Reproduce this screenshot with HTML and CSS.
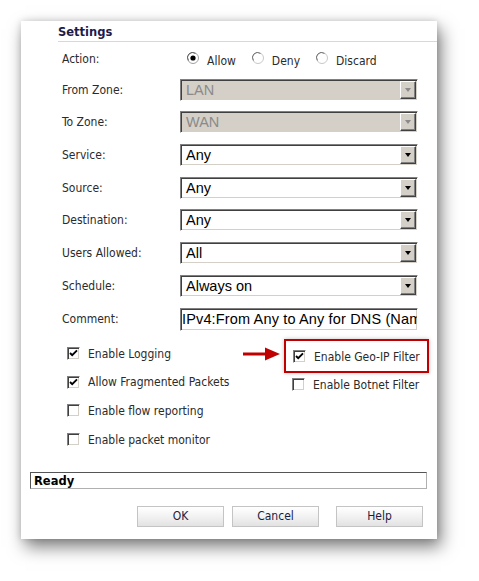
FILE: index.html
```html
<!DOCTYPE html>
<html lang="en">
<head>
  <meta charset="UTF-8">
  <title>Settings</title>
  <link rel="stylesheet" href="styles.css">
</head>
<body>

  <div class="dialog">
    <h2 class="title">Settings</h2>

    <div class="fields">
      <label class="lbl">Action:</label>
      <div class="radios">
        <span class="opt">
          <svg class="radio" width="12" height="12" viewBox="0 0 12 12"><circle cx="6" cy="6" r="5.5" fill="#fff" stroke="#a0a0a0"/><path d="M1.5 8.5A5 5 0 0 1 8.5 1.5" fill="none" stroke="#606060"/><circle cx="6" cy="6" r="2.6" fill="#000"/></svg>
          Allow
        </span>
        <span class="opt">
          <svg class="radio" width="12" height="12" viewBox="0 0 12 12"><circle cx="6" cy="6" r="5.5" fill="#fff" stroke="#c8c8c8"/><path d="M1.5 8.5A5 5 0 0 1 8.5 1.5" fill="none" stroke="#707070"/></svg>
          Deny
        </span>
        <span class="opt">
          <svg class="radio" width="12" height="12" viewBox="0 0 12 12"><circle cx="6" cy="6" r="5.5" fill="#fff" stroke="#c8c8c8"/><path d="M1.5 8.5A5 5 0 0 1 8.5 1.5" fill="none" stroke="#707070"/></svg>
          Discard
        </span>
      </div>

      <label class="lbl">From Zone:</label>
      <div class="select disabled"><span class="value">LAN</span><span class="drop"><i></i></span></div>

      <label class="lbl">To Zone:</label>
      <div class="select disabled"><span class="value">WAN</span><span class="drop"><i></i></span></div>

      <label class="lbl">Service:</label>
      <div class="select"><span class="value">Any</span><span class="drop"><i></i></span></div>

      <label class="lbl">Source:</label>
      <div class="select"><span class="value">Any</span><span class="drop"><i></i></span></div>

      <label class="lbl">Destination:</label>
      <div class="select"><span class="value">Any</span><span class="drop"><i></i></span></div>

      <label class="lbl">Users Allowed:</label>
      <div class="select"><span class="value">All</span><span class="drop"><i></i></span></div>

      <label class="lbl">Schedule:</label>
      <div class="select"><span class="value">Always on</span><span class="drop"><i></i></span></div>

      <label class="lbl">Comment:</label>
      <div class="textbox">IPv4:From Any to Any for DNS (Name Service)</div>
    </div>

    <div class="options">
      <div class="col-left">
        <div class="chk-row">
          <span class="check"><svg width="9" height="9" viewBox="0 0 9 9"><path d="M1 4 L3.2 6.2 L8 1.4" fill="none" stroke="#000" stroke-width="1.9"/></svg></span>
          Enable Logging
        </div>
        <div class="chk-row">
          <span class="check"><svg width="9" height="9" viewBox="0 0 9 9"><path d="M1 4 L3.2 6.2 L8 1.4" fill="none" stroke="#000" stroke-width="1.9"/></svg></span>
          Allow Fragmented Packets
        </div>
        <div class="chk-row">
          <span class="check"></span>
          Enable flow reporting
        </div>
        <div class="chk-row">
          <span class="check"></span>
          Enable packet monitor
        </div>
      </div>

      <div class="col-right">
        <div class="callout">
          <svg class="arrow" width="38" height="14" viewBox="0 0 38 14"><rect x="0" y="5.5" width="24" height="3" fill="#c00000"/><path d="M22 0.5 L37 7 L22 13.5 Z" fill="#c00000"/></svg>
          <div class="highlight">
            <div class="chk-row">
              <span class="check"><svg width="9" height="9" viewBox="0 0 9 9"><path d="M1 4 L3.2 6.2 L8 1.4" fill="none" stroke="#000" stroke-width="1.9"/></svg></span>
              Enable Geo-IP Filter
            </div>
          </div>
        </div>
        <div class="chk-row botnet">
          <span class="check"></span>
          Enable Botnet Filter
        </div>
      </div>
    </div>

    <div class="status">Ready</div>

    <div class="buttons">
      <button type="button">OK</button>
      <button type="button">Cancel</button>
      <button type="button" class="help">Help</button>
    </div>
  </div>

</body>
</html>
```

FILE: styles.css
```css
* {
  margin: 0;
  padding: 0;
  box-sizing: border-box;
}

body {
  font-family: "DejaVu Sans Condensed", "DejaVu Sans", sans-serif;
  font-stretch: condensed;
  font-size: 12px;
  color: #2b2b2b;
  background: #fff;
  min-height: 581px;
  padding: 21px 0 0 21px;
}

.dialog {
  width: 416px;
  height: 518px;
  background: #fff;
  box-shadow: 4px 8px 16px rgba(0,0,0,0.5), 0 0 7px rgba(0,0,0,0.15);
}

.title {
  margin-left: 37px;
  padding-top: 4px;
  padding-bottom: 1px;
  line-height: 15px;
  font-family: "DejaVu Sans", sans-serif;
  font-stretch: normal;
  font-size: 11.5px;
  font-weight: bold;
  color: #1c1c4c;
  border-bottom: 1px solid #d8d8d8;
}

/* label / control grid */
.fields {
  display: grid;
  grid-template-columns: 118px 238px;
  row-gap: 10.7px;
  padding: 8px 0 0 41px;
}

.lbl {
  display: flex;
  align-items: center;
}

.radios {
  display: flex;
  align-items: center;
  height: 18px;
  padding-left: 7px;
}

.opt {
  display: flex;
  align-items: center;
  gap: 8px;
  margin-right: 16px;
  padding-top: 3px;
}

.radio {
  margin-bottom: 5px;
}

.select {
  display: flex;
  height: 22px;
  background: #fff;
  border-top: 1px solid #808080;
  border-left: 1px solid #808080;
  border-right: 1px solid #fff;
  border-bottom: 1px solid #fff;
  box-shadow: inset 1px 1px #404040, inset -1px -1px #d4d0c8;
  padding: 1px;
}

.select .value {
  flex: 1;
  padding-left: 4px;
  font-family: "Liberation Sans", Arial, sans-serif;
  font-stretch: normal;
  font-size: 14.5px;
  line-height: 18px;
  color: #000;
}

.drop {
  width: 16px;
  background: #d4d0c8;
  border-top: 1px solid #fff;
  border-left: 1px solid #fff;
  border-right: 1px solid #404040;
  border-bottom: 1px solid #404040;
  box-shadow: inset -1px -1px #808080;
  display: flex;
  align-items: center;
  justify-content: center;
}

.drop i {
  width: 0;
  height: 0;
  border-left: 3.5px solid transparent;
  border-right: 3.5px solid transparent;
  border-top: 4px solid #000;
}

.select.disabled {
  background: #d4d0c8;
}

.select.disabled .value {
  color: #8a8a8a;
}

.select.disabled .drop i {
  border-top-color: #8a8a8a;
}

.textbox {
  height: 23px;
  overflow: hidden;
  white-space: nowrap;
  background: #fff;
  border-top: 1px solid #808080;
  border-left: 1px solid #808080;
  border-right: 1px solid #fff;
  border-bottom: 1px solid #fff;
  box-shadow: inset 1px 1px #404040, inset -1px -1px #d4d0c8;
  padding-left: 1px;
  font-family: "Liberation Sans", Arial, sans-serif;
  font-stretch: normal;
  font-size: 14.5px;
  letter-spacing: 0.15px;
  line-height: 21px;
  color: #000;
}

/* checkbox area */
.options {
  display: flex;
  margin-top: 8px;
}

.col-left {
  width: 222px;
  padding: 1px 0 0 46px;
}

.col-left .chk-row {
  height: 28.6px;
}

.chk-row {
  display: flex;
  align-items: center;
  gap: 8px;
  white-space: nowrap;
}

.check {
  width: 13px;
  height: 13px;
  flex: none;
  background: #fff;
  border-top: 1px solid #808080;
  border-left: 1px solid #808080;
  border-right: 1px solid #fff;
  border-bottom: 1px solid #fff;
  box-shadow: inset 1px 1px #404040, inset -1px -1px #d4d0c8;
  display: flex;
  align-items: center;
  justify-content: center;
}

.callout {
  display: flex;
  align-items: center;
  gap: 3px;
}

.arrow {
  margin-bottom: 3px;
}

.highlight {
  width: 145px;
  height: 34px;
  border: 2px solid #c00000;
  box-shadow: 0 0 4px rgba(0,0,0,0.25);
  display: flex;
  align-items: center;
  padding-left: 7px;
}

.highlight .chk-row {
  padding-top: 2px;
}

.botnet {
  height: 20px;
  margin-top: 2px;
  padding-left: 49px;
}

.status {
  margin: 18px 10px 0 9px;
  height: 17px;
  border-top: 1px solid #555;
  border-left: 1px solid #555;
  border-right: 1px solid #b0b0b0;
  border-bottom: 1px solid #b0b0b0;
  padding: 2px 0 0 3px;
  line-height: 13px;
  font-family: "DejaVu Sans", sans-serif;
  font-stretch: normal;
  font-size: 11.5px;
  font-weight: bold;
  color: #000;
}

.buttons {
  display: flex;
  justify-content: flex-end;
  gap: 8px;
  margin-top: 17px;
  padding-right: 14px;
}

button {
  width: 87px;
  height: 21px;
  font-family: inherit;
  font-stretch: condensed;
  font-size: 12px;
  color: #1c1c40;
  border: 1px solid #c4c4c4;
  background: linear-gradient(#ffffff, #f2f2f2 50%, #e2e2e2);
}

.help {
  margin-left: 9px;
}
```
